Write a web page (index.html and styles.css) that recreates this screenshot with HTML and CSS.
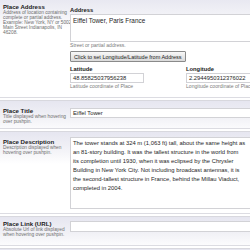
FILE: index.html
```html
<!DOCTYPE html>
<html lang="en">
<head>
    <meta charset="UTF-8">
    <title>Place Settings</title>
    <link rel="stylesheet" href="styles.css">
</head>
<body>
    <div class="form">
        <!-- Place Address -->
        <div class="row row-address">
            <div class="th">
                <div class="label">Place Address</div>
                <div class="desc">Address of location containing<br>complete or partial address.<br>Example: New York, NY or 5002<br>Main Street Indianapolis, IN<br>46208.</div>
            </div>
            <div class="td">
                <div class="field-label">Address</div>
                <div class="textarea addr">Eiffel Tower, Paris France</div>
                <div class="note">Street or partial address.</div>
                <button class="btn">Click to set Longitude/Latitude from Address</button>
                <div class="coords">
                    <div class="coord">
                        <div class="field-label">Latitude</div>
                        <div class="input small">48.85825037956238</div>
                        <div class="note">Latitude coordinate of Place</div>
                    </div>
                    <div class="coord">
                        <div class="field-label">Longitude</div>
                        <div class="input small">2.2944950312376022</div>
                        <div class="note">Longitude coordinate of Place</div>
                    </div>
                </div>
            </div>
        </div>

        <!-- Place Title -->
        <div class="row row-title">
            <div class="th">
                <div class="label">Place Title</div>
                <div class="desc">Title displayed when hovering<br>over pushpin.</div>
            </div>
            <div class="td">
                <div class="input">Eiffel Tower</div>
            </div>
        </div>

        <!-- Place Description -->
        <div class="row row-descr">
            <div class="th">
                <div class="label">Place Description</div>
                <div class="desc">Description displayed when<br>hovering over pushpin.</div>
            </div>
            <div class="td">
                <div class="textarea big">The tower stands at 324 m (1,063 ft) tall, about the same height as<br>an 81-story building. It was the tallest structure in the world from<br>its completion until 1930, when it was eclipsed by the Chrysler<br>Building in New York City. Not including broadcast antennas, it is<br>the second-tallest structure in France, behind the Millau Viaduct,<br>completed in 2004.</div>
            </div>
        </div>

        <!-- Place Link -->
        <div class="row row-link">
            <div class="th">
                <div class="label">Place Link (URL)</div>
                <div class="desc">Absolute Url of link displayed<br>when hovering over pushpin.</div>
            </div>
            <div class="td">
                <div class="input link"></div>
            </div>
        </div>

        <div class="row last"></div>
    </div>
</body>
</html>
```

FILE: styles.css
```css
* {
    box-sizing: border-box;
}
body {
    margin: 0;
    overflow: hidden;
    background: #fff;
    font-family: "Liberation Sans", Arial, sans-serif;
    color: #222;
}
.form {
    width: 320px;
    margin-top: -4px;
}
.row {
    display: flex;
    border-top: 1px solid #d8d8de;
    border-bottom: 1px solid #dcdce2;
    background: linear-gradient(#e6e6f0, #f1f1f6 16px, #fff 32px);
    margin-bottom: 2px;
}
.row.last {
    height: 20px;
}
.th {
    width: 70px;
    flex-shrink: 0;
    padding: 6px 2px 0 3px;
    white-space: nowrap;
}
.td {
    flex: 1;
}
/* alturas de cada fila */
.row-address .td {
    padding: 10px 0 8px;
}
.row-title .th {
    padding-top: 6px;
}
.row-title .td {
    padding: 7px 0 10px;
}
.row-descr .th {
    padding-top: 6px;
}
.row-descr .td {
    padding: 5px 0 4px;
}
.row-link .th {
    padding-top: 3px;
}
.row-link .td {
    padding: 4px 0 13px;
}
.label {
    font-size: 6.1px;
    font-weight: bold;
    line-height: 7px;
    color: #1a1a1a;
}
.desc {
    font-size: 4.8px;
    line-height: 5px;
    color: #6e6e6e;
}
.field-label {
    font-size: 5.8px;
    font-weight: bold;
    line-height: 7px;
    color: #1a1a1a;
}
.textarea,
.input {
    background: #fff;
    border: 1px solid #d2d2d6;
    color: #1e1e1e;
}
.textarea {
    font-size: 6.4px;
    padding: 2px 2px;
}
.addr {
    height: 28px;
    line-height: 7px;
}
.big {
    height: 72px;
    font-size: 5.85px;
    line-height: 9px;
    padding: 1px 2px;
    white-space: nowrap;
}
.input {
    height: 10px;
    font-size: 5.8px;
    line-height: 8px;
    padding: 0 2px;
}
.link {
    height: 11px;
}
.small {
    width: 74px;
}
.note {
    font-size: 5.1px;
    line-height: 6px;
    color: #7a7a7a;
    white-space: nowrap;
}
.btn {
    display: block;
    margin: 3px 0 4px;
    height: 11px;
    padding: 0 3px;
    font-family: "Liberation Sans", Arial, sans-serif;
    font-size: 5.5px;
    color: #222;
    background: linear-gradient(#f8f8f8, #dadada);
    border: 1px solid #8a8a8a;
    border-radius: 1px;
}
.coords {
    display: flex;
}
.coord {
    width: 116px;
}
```
